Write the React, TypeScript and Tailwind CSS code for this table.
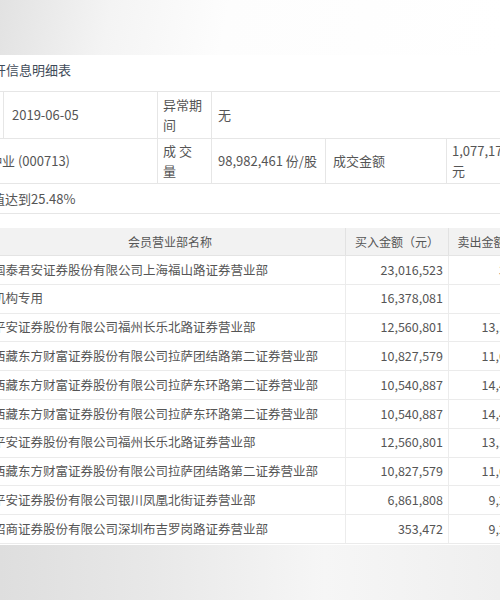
import React from "react";

const rows: [string, string, string][] = [
  ["国泰君安证券股份有限公司上海福山路证券营业部", "23,016,523", "327,542"],
  ["机构专用", "16,378,081", ""],
  ["平安证券股份有限公司福州长乐北路证券营业部", "12,560,801", "13,137,251"],
  ["西藏东方财富证券股份有限公司拉萨团结路第二证券营业部", "10,827,579", "11,643,019"],
  ["西藏东方财富证券股份有限公司拉萨东环路第二证券营业部", "10,540,887", "14,402,566"],
  ["西藏东方财富证券股份有限公司拉萨东环路第二证券营业部", "10,540,887", "14,402,566"],
  ["平安证券股份有限公司福州长乐北路证券营业部", "12,560,801", "13,137,251"],
  ["西藏东方财富证券股份有限公司拉萨团结路第二证券营业部", "10,827,579", "11,643,019"],
  ["平安证券股份有限公司银川凤凰北街证券营业部", "6,861,808", "9,287,352"],
  ["招商证券股份有限公司深圳布吉罗岗路证券营业部", "353,472", "9,215,688"],
];

export default function App() {
  return (
    <div className="w-[500px] h-[600px] overflow-hidden flex flex-col bg-white text-[#555] font-['Noto_Sans_CJK_SC','Noto_Sans',sans-serif]">
      {/* top backdrop */}
      <div className="h-[55px] shrink-0 bg-[linear-gradient(100deg,#e2e2e2_0%,#f4f4f4_22%,#fdfdfd_45%,#ffffff_100%)]" />

      {/* panel */}
      <div className="h-[490px] shrink-0 bg-white flex flex-col">
        {/* title */}
        <div className="h-[36px] pt-[7px] ml-[-20px] whitespace-nowrap text-[13px] leading-[16px] text-[#3f4b59]">
          公开信息明细表
        </div>

        {/* table 1 */}
        <div className="ml-[-80px] w-[640px] border-t border-[#e6e6e6] text-[13px] leading-[20px]">
          <div className="flex h-[47px] border-b border-[#e6e6e6]">
            <div className="w-[84px] border-r border-[#e6e6e6] flex items-center pl-2 whitespace-nowrap">上榜日期</div>
            <div className="w-[154px] border-r border-[#e6e6e6] flex items-center pl-[8px]">2019-06-05</div>
            <div className="w-[54px] border-r border-[#e6e6e6] flex flex-col justify-center pl-[5px]">
              <span>异常期</span>
              <span>间</span>
            </div>
            <div className="flex-1 flex items-center pl-[6px]">无</div>
          </div>
          <div className="flex h-[45px] border-b border-[#e6e6e6]">
            <div className="w-[35px] border-r border-[#e6e6e6]" />
            <div className="w-[203px] border-r border-[#e6e6e6] flex items-center pl-[8px] whitespace-nowrap">丰乐种业 (000713)</div>
            <div className="w-[54px] border-r border-[#e6e6e6] flex flex-col justify-center pl-[5px]">
              <span>成 交</span>
              <span>量</span>
            </div>
            <div className="w-[114px] border-r border-[#e6e6e6] flex items-center pl-[6px] whitespace-nowrap">98,982,461 份/股</div>
            <div className="w-[121px] border-r border-[#e6e6e6] flex items-center pl-[7px]">成交金额</div>
            <div className="flex-1 flex flex-col justify-center pl-[5px] whitespace-nowrap">
              <span>1,077,176,364</span>
              <span>元</span>
            </div>
          </div>
          <div className="flex h-[30px] border-b border-[#e6e6e6] items-center pl-[20px] whitespace-nowrap">
            涨幅偏离值达到25.48%
          </div>
        </div>

        <div className="h-[14px]" />

        {/* table 2 */}
        <div className="ml-[-15px] w-[565px] text-[12.5px]">
          <div className="flex h-[28px] bg-[#f2f2f2] border-b border-[#e4e4e4] text-[12px] items-center">
            <div className="w-[360px] h-full flex items-center justify-center pl-[10px]">会员营业部名称</div>
            <div className="w-[103px] h-full flex items-center justify-center border-l border-[#e2e2e2] whitespace-nowrap">买入金额（元）</div>
            <div className="w-[102px] h-full flex items-center justify-center border-l border-[#e2e2e2] whitespace-nowrap">卖出金额（元）</div>
          </div>
          {rows.map((r, i) => (
            <div key={i} className="flex h-[28.8px] border-b border-[#ebebeb]">
              <div className="w-[360px] flex items-center pl-[8px] whitespace-nowrap">{r[0]}</div>
              <div className="w-[103px] flex items-center justify-end pr-[5px] border-l border-[#ececec]">{r[1]}</div>
              <div className="w-[102px] flex items-center justify-end pr-[6px] border-l border-[#ececec]">{r[2]}</div>
            </div>
          ))}
        </div>
      </div>

      {/* bottom backdrop */}
      <div className="flex-1 bg-[linear-gradient(90deg,#dedede_0%,#e8e8e8_30%,#f6f6f6_65%,#efefef_100%)]" />
    </div>
  );
}
